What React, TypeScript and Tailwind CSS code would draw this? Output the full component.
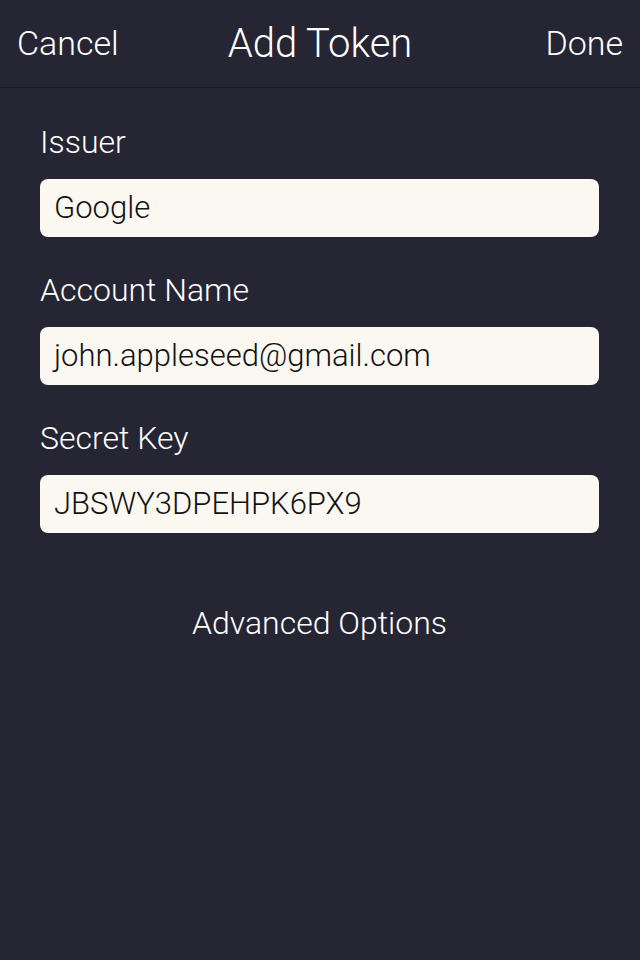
const fields = [
  { label: "Issuer", value: "Google" },
  { label: "Account Name", value: "john.appleseed@gmail.com" },
  { label: "Secret Key", value: "JBSWY3DPEHPK6PX9" },
]

export default function App() {
  return (
    <div
      className="min-h-[960px] w-full bg-[#252533] text-white font-light"
      style={{ fontFamily: "Roboto, 'Liberation Sans', sans-serif" }}
    >
      <header className="grid h-[88px] grid-cols-[1fr_auto_1fr] items-center border-b border-[#1a1a24] px-[17px]">
        <button className="justify-self-start text-[34px] font-light">Cancel</button>
        <h1 className="text-[40px] font-light">Add Token</h1>
        <button className="justify-self-end text-[34px] font-light">Done</button>
      </header>

      <div className="pl-[40px] pr-[41px] pt-[34px]">
        {fields.map((f, i) => (
          <div key={f.label} className={i > 0 ? "mt-[33px]" : ""}>
            <div className="text-[32px] leading-[40px]">{f.label}</div>
            <div className="mt-[17px] flex h-[58px] items-center rounded-[8px] bg-[#faf8f1] px-[14px] text-[31px] text-[#111]">
              {f.value}
            </div>
          </div>
        ))}

        <div className="mt-[70px] text-center text-[32px] leading-[40px]">Advanced Options</div>
      </div>
    </div>
  )
}
